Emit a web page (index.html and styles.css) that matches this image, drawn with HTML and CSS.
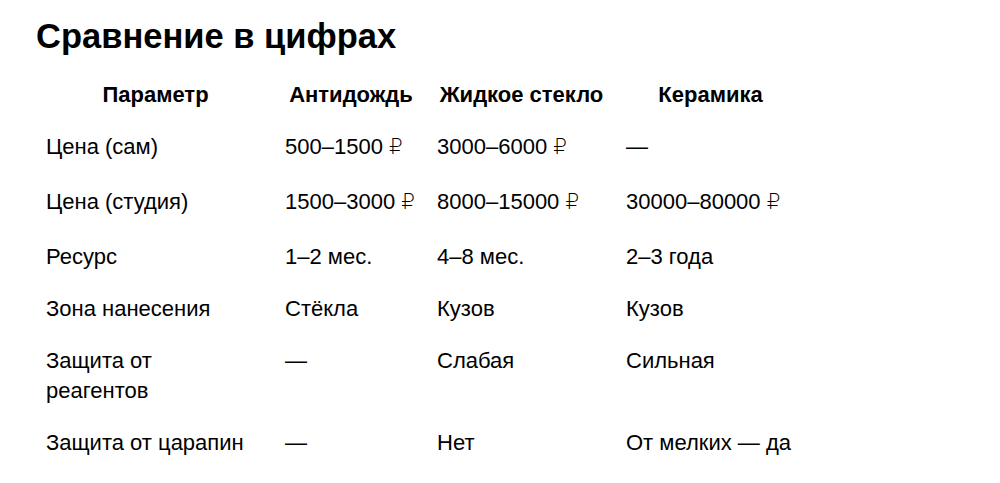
FILE: index.html
```html
<!DOCTYPE html>
<html lang="ru">
<head>
<meta charset="utf-8">
<link rel="stylesheet" href="styles.css">
</head>
<body>
<main class="page">
  <h1 class="title">Сравнение в цифрах</h1>
  <table class="compare">
    <colgroup>
      <col class="c-param">
      <col class="c-rain">
      <col class="c-glass">
      <col class="c-ceramic">
    </colgroup>
    <thead>
      <tr><th>Параметр</th><th>Антидождь</th><th>Жидкое стекло</th><th>Керамика</th></tr>
    </thead>
    <tbody>
      <tr class="price"><td>Цена (сам)</td><td>500–1500 <span class="rub">₽</span></td><td>3000–6000 <span class="rub">₽</span></td><td>—</td></tr>
      <tr class="price"><td>Цена (студия)</td><td>1500–3000 <span class="rub">₽</span></td><td>8000–15000 <span class="rub">₽</span></td><td>30000–80000 <span class="rub">₽</span></td></tr>
      <tr><td>Ресурс</td><td>1–2 мес.</td><td>4–8 мес.</td><td>2–3 года</td></tr>
      <tr><td>Зона нанесения</td><td>Стёкла</td><td>Кузов</td><td>Кузов</td></tr>
      <tr><td>Защита от реагентов</td><td>—</td><td>Слабая</td><td>Сильная</td></tr>
      <tr><td>Защита от царапин</td><td>—</td><td>Нет</td><td>От мелких — да</td></tr>
    </tbody>
  </table>
</main>
</body>
</html>
```

FILE: styles.css
```css
html, body {
  margin: 0;
  padding: 0;
  background: #fff;
}

body {
  font-family: "Liberation Sans", Arial, sans-serif;
  color: #000;
}

.page {
  padding: 17px 36px;
}

.title {
  margin: 0 0 12px;
  font-size: 34.5px;
  font-weight: 700;
  line-height: 1.15;
}

.compare {
  border-collapse: collapse;
  table-layout: fixed;
  width: 769px;
  font-size: 22px;
  line-height: 30px;
}

.c-param { width: 239px; }
.c-rain { width: 152px; }
.c-glass { width: 189px; }
.c-ceramic { width: 189px; }

.compare th,
.compare td {
  padding: 11px 10px;
  vertical-align: top;
}

.compare th {
  font-weight: 700;
  text-align: center;
}

.compare td {
  text-align: left;
}

.compare td:first-child {
  padding-right: 18px;
}

.compare .price td {
  padding-bottom: 14px;
}

.rub {
  font-family: "DejaVu Sans", sans-serif;
  font-weight: 200;
  font-size: 0.98em;
}
```
